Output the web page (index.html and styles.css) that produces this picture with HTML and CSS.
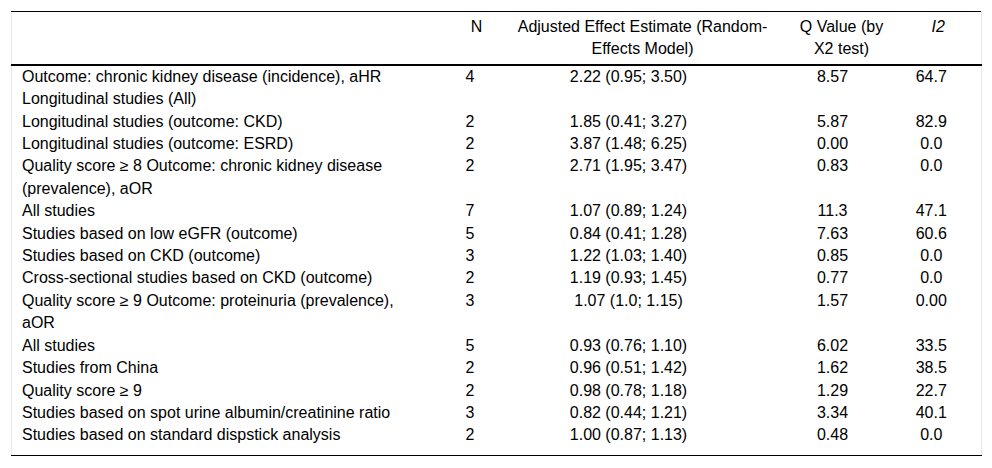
FILE: index.html
```html
<!DOCTYPE html>
<html>
<head>
<meta charset="utf-8">
<link rel="stylesheet" href="styles.css">
</head>
<body>
<div class="wrap">
<table class="tbl">
<colgroup>
<col class="c1"><col class="c2"><col class="c3"><col class="c4"><col class="c5">
</colgroup>
<thead>
<tr>
<th class="lab"></th>
<th class="n">N</th>
<th class="est">Adjusted Effect Estimate (Random-Effects Model)</th>
<th class="q">Q Value (by X2 test)</th>
<th class="i2"><i>I2</i></th>
</tr>
</thead>
<tbody>
<tr><td class="lab">Outcome: chronic kidney disease (incidence), aHR Longitudinal studies (All)</td><td class="n">4</td><td class="est">2.22 (0.95; 3.50)</td><td class="q">8.57</td><td class="i2">64.7</td></tr>
<tr><td class="lab">Longitudinal studies (outcome: CKD)</td><td class="n">2</td><td class="est">1.85 (0.41; 3.27)</td><td class="q">5.87</td><td class="i2">82.9</td></tr>
<tr><td class="lab">Longitudinal studies (outcome: ESRD)</td><td class="n">2</td><td class="est">3.87 (1.48; 6.25)</td><td class="q">0.00</td><td class="i2">0.0</td></tr>
<tr><td class="lab">Quality score ≥ 8 Outcome: chronic kidney disease (prevalence), aOR</td><td class="n">2</td><td class="est">2.71 (1.95; 3.47)</td><td class="q">0.83</td><td class="i2">0.0</td></tr>
<tr><td class="lab">All studies</td><td class="n">7</td><td class="est">1.07 (0.89; 1.24)</td><td class="q">11.3</td><td class="i2">47.1</td></tr>
<tr><td class="lab">Studies based on low eGFR (outcome)</td><td class="n">5</td><td class="est">0.84 (0.41; 1.28)</td><td class="q">7.63</td><td class="i2">60.6</td></tr>
<tr><td class="lab">Studies based on CKD (outcome)</td><td class="n">3</td><td class="est">1.22 (1.03; 1.40)</td><td class="q">0.85</td><td class="i2">0.0</td></tr>
<tr><td class="lab">Cross-sectional studies based on CKD (outcome)</td><td class="n">2</td><td class="est">1.19 (0.93; 1.45)</td><td class="q">0.77</td><td class="i2">0.0</td></tr>
<tr><td class="lab">Quality score ≥ 9 Outcome: proteinuria (prevalence), aOR</td><td class="n">3</td><td class="est">1.07 (1.0; 1.15)</td><td class="q">1.57</td><td class="i2">0.00</td></tr>
<tr><td class="lab">All studies</td><td class="n">5</td><td class="est">0.93 (0.76; 1.10)</td><td class="q">6.02</td><td class="i2">33.5</td></tr>
<tr><td class="lab">Studies from China</td><td class="n">2</td><td class="est">0.96 (0.51; 1.42)</td><td class="q">1.62</td><td class="i2">38.5</td></tr>
<tr><td class="lab">Quality score ≥ 9</td><td class="n">2</td><td class="est">0.98 (0.78; 1.18)</td><td class="q">1.29</td><td class="i2">22.7</td></tr>
<tr><td class="lab">Studies based on spot urine albumin/creatinine ratio</td><td class="n">3</td><td class="est">0.82 (0.44; 1.21)</td><td class="q">3.34</td><td class="i2">40.1</td></tr>
<tr class="last"><td class="lab">Studies based on standard dispstick analysis</td><td class="n">2</td><td class="est">1.00 (0.87; 1.13)</td><td class="q">0.48</td><td class="i2">0.0</td></tr>
</tbody>
</table>
</div>
</body>
</html>
```
FILE: styles.css
```css
html, body {
  margin: 0;
  padding: 0;
  background: #fff;
}
body {
  font-family: "Liberation Sans", Arial, sans-serif;
  font-size: 16px;
  line-height: 22.4px;
  color: #000;
}
.wrap {
  padding: 11px 11px 0 11px;
}
.tbl {
  width: 970px;
  border-collapse: collapse;
  table-layout: fixed;
  border-top: 1px solid #000;
  border-bottom: 1px solid #000;
  border-left: 1px solid #e8e8e8;
  border-right: 1px solid #e8e8e8;
}
.c1 { width: 444px; }
.c2 { width: 42px; }
.c3 { width: 290px; }
.c4 { width: 108px; }
.c5 { width: 86px; }
.tbl th {
  font-weight: normal;
  text-align: center;
  vertical-align: top;
  padding: 4px 10px 3px 10px;
  border-bottom: 2px solid #000;
}
.tbl td {
  vertical-align: top;
  padding: 0 10px;
}
.tbl td.lab {
  text-align: left;
  padding-left: 10px;
  padding-right: 40px;
}
.tbl td.n {
  text-align: left;
}
.tbl td.est {
  text-align: center;
  padding-right: 38px;
}
.tbl td.q {
  text-align: center;
  padding-right: 28px;
}
.tbl td.i2 {
  text-align: center;
  padding-right: 24px;
}
.tbl tr.last td {
  padding-bottom: 8px;
}
```
